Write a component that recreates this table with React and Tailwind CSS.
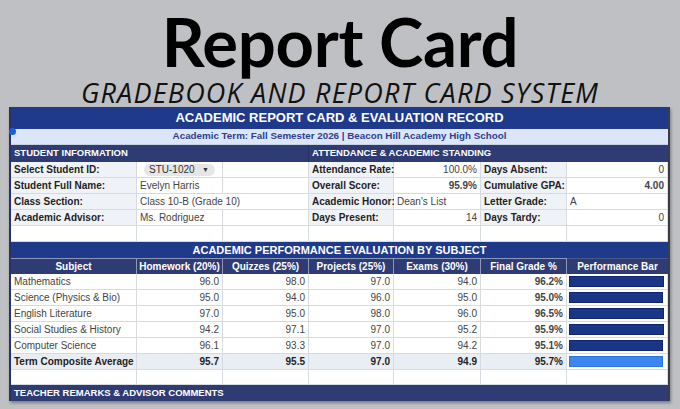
import React from "react";

const GRID = "grid grid-cols-[126px_86px_86px_85px_87px_86px_101px]";
const line = "border-r border-b border-[#d6dae1]";
const label = `${line} bg-[#eff2f6] pl-[3px] font-bold text-[#1f1f1f] flex items-center whitespace-nowrap`;
const value = `${line} bg-white px-[3px] text-[#444] flex items-center whitespace-nowrap`;

const subjects = [
  { name: "Mathematics", hw: "96.0", qz: "98.0", pj: "97.0", ex: "94.0", fin: "96.2%", bar: 95 },
  { name: "Science (Physics & Bio)", hw: "95.0", qz: "94.0", pj: "96.0", ex: "95.0", fin: "95.0%", bar: 94 },
  { name: "English Literature", hw: "97.0", qz: "95.0", pj: "98.0", ex: "96.0", fin: "96.5%", bar: 95 },
  { name: "Social Studies & History", hw: "94.2", qz: "97.1", pj: "97.0", ex: "95.2", fin: "95.9%", bar: 95 },
  { name: "Computer Science", hw: "96.1", qz: "93.3", pj: "97.0", ex: "94.2", fin: "95.1%", bar: 94 },
];

function Bar({ width, light }) {
  return (
    <div className={`${line} bg-white flex items-center pl-[2px]`}>
      <div
        className={
          light
            ? "h-[11px] bg-[#3c86f0] border border-[#2f74dc]"
            : "h-[11px] bg-[#1b3587] border border-[#0f2572]"
        }
        style={{ width: `${width}px` }}
      />
    </div>
  );
}

export default function App() {
  return (
    <div className="w-[680px] h-[409px] overflow-hidden bg-[#bfc0c4] font-['Liberation_Sans',Arial,sans-serif] text-[10px]">
      <div className="flex flex-col items-center text-black">
        <h1 className="pt-[8px] font-['Lato',sans-serif] text-[67px] leading-[67px] font-bold tracking-[-0.3px]">Report Card</h1>
        <p className="mt-[4px] font-['Open_Sans',sans-serif] text-[27px] leading-[27px] italic tracking-[1.2px] text-[#111]">
          GRADEBOOK AND REPORT CARD SYSTEM
        </p>
      </div>

      <div className="relative mt-[1px] ml-[9px] w-[661px] border-l-2 border-l-[#26346a] border-r-2 border-r-[#3b3d44] shadow-[1px_2px_3px_rgba(0,0,0,0.35)] bg-white">
        <div className="absolute left-[-2px] top-[21px] w-[7px] h-[7px] rounded-full bg-[#1e5be0]" />

        {/* title */}
        <div className="h-[22px] bg-[#1f3a8b] text-white font-bold text-[13px] flex items-center justify-center">
          ACADEMIC REPORT CARD &amp; EVALUATION RECORD
        </div>
        <div className="h-[16px] bg-[#dde6f8] border-b border-[#c6d0e4] text-[#2c3f8e] font-bold text-[9.8px] flex items-center justify-center">
          Academic Term: Fall Semester 2026 | Beacon Hill Academy High School
        </div>

        {/* section headers */}
        <div className={`${GRID} h-[17px] text-white font-bold text-[9.5px]`}>
          <div className="col-span-3 bg-[#2e3c73] flex items-center pl-[3px] border-r border-[#26336a]">STUDENT INFORMATION</div>
          <div className="col-span-4 bg-[#2e3c73] flex items-center pl-[3px]">ATTENDANCE &amp; ACADEMIC STANDING</div>
        </div>

        <div className={`${GRID} h-[16px]`}>
          <div className={label}>Select Student ID:</div>
          <div className={`${value} pl-[7px]`}>
            <div className="h-[12px] w-[71px] rounded-full bg-[#e6e6e8] flex items-center pl-[5px] text-[#333]">
              STU-1020
              <span className="ml-auto mr-[6px] text-[7px] leading-none">▼</span>
            </div>
          </div>
          <div className={value} />
          <div className={label}>Attendance Rate:</div>
          <div className={`${value} justify-end`}>100.0%</div>
          <div className={label}>Days Absent:</div>
          <div className={`${value} justify-end`}>0</div>
        </div>
        <div className={`${GRID} h-[16px]`}>
          <div className={label}>Student Full Name:</div>
          <div className={value}>Evelyn Harris</div>
          <div className={value} />
          <div className={label}>Overall Score:</div>
          <div className={`${value} justify-end font-bold text-[#222]`}>95.9%</div>
          <div className={label}>Cumulative GPA:</div>
          <div className={`${value} justify-end font-bold text-[#222]`}>4.00</div>
        </div>
        <div className={`${GRID} h-[16px]`}>
          <div className={label}>Class Section:</div>
          <div className={`${value} border-r-0 overflow-visible`}>Class 10-B (Grade 10)</div>
          <div className="border-r border-b border-[#d6dae1]" />
          <div className={label}>Academic Honor:</div>
          <div className={value}>Dean's List</div>
          <div className={label}>Letter Grade:</div>
          <div className={value}>A</div>
        </div>
        <div className={`${GRID} h-[16px]`}>
          <div className={label}>Academic Advisor:</div>
          <div className={value}>Ms. Rodriguez</div>
          <div className={value} />
          <div className={label}>Days Present:</div>
          <div className={`${value} justify-end`}>14</div>
          <div className={label}>Days Tardy:</div>
          <div className={`${value} justify-end`}>0</div>
        </div>
        <div className={`${GRID} h-[16px]`}>
          {Array.from({ length: 7 }).map((_, i) => (
            <div key={i} className={line} />
          ))}
        </div>

        {/* performance */}
        <div className="h-[16px] bg-[#1f3a8b] text-white font-bold text-[11px] flex items-center justify-center">
          ACADEMIC PERFORMANCE EVALUATION BY SUBJECT
        </div>
        <div className={`${GRID} h-[16px] bg-[#2e3c73] text-white font-bold`}>
          {["Subject", "Homework (20%)", "Quizzes (25%)", "Projects (25%)", "Exams (30%)", "Final Grade %", "Performance Bar"].map((h, i) => (
            <div
              key={h}
              className={`flex items-center justify-center whitespace-nowrap ${i < 6 ? "border-r border-[#8d97b9]" : ""} border-t border-[#4a5789]`}
            >
              {h}
            </div>
          ))}
        </div>

        {subjects.map((s) => (
          <div key={s.name} className={`${GRID} h-[16px]`}>
            <div className={`${value} text-[#3a3a3a]`}>{s.name}</div>
            <div className={`${value} justify-end`}>{s.hw}</div>
            <div className={`${value} justify-end`}>{s.qz}</div>
            <div className={`${value} justify-end`}>{s.pj}</div>
            <div className={`${value} justify-end`}>{s.ex}</div>
            <div className={`${value} justify-end font-bold text-[#222]`}>{s.fin}</div>
            <Bar width={s.bar} />
          </div>
        ))}

        <div className={`${GRID} h-[16px] font-bold text-[#1f1f1f]`}>
          <div className={`${line} bg-[#e9edf4] pl-[3px] flex items-center whitespace-nowrap`}>Term Composite Average</div>
          <div className={`${line} bg-[#e9edf4] px-[3px] flex items-center justify-end`}>95.7</div>
          <div className={`${line} bg-[#e9edf4] px-[3px] flex items-center justify-end`}>95.5</div>
          <div className={`${line} bg-[#e9edf4] px-[3px] flex items-center justify-end`}>97.0</div>
          <div className={`${line} bg-[#e9edf4] px-[3px] flex items-center justify-end`}>94.9</div>
          <div className={`${line} bg-[#e9edf4] px-[3px] flex items-center justify-end`}>95.7%</div>
          <Bar width={94} light />
        </div>

        <div className={`${GRID} h-[15px]`}>
          {Array.from({ length: 7 }).map((_, i) => (
            <div key={i} className={line} />
          ))}
        </div>

        <div className="h-[16px] bg-[#2e3c73] text-white font-bold text-[9.5px] flex items-center pl-[3px]">
          TEACHER REMARKS &amp; ADVISOR COMMENTS
        </div>
      </div>
    </div>
  );
}
